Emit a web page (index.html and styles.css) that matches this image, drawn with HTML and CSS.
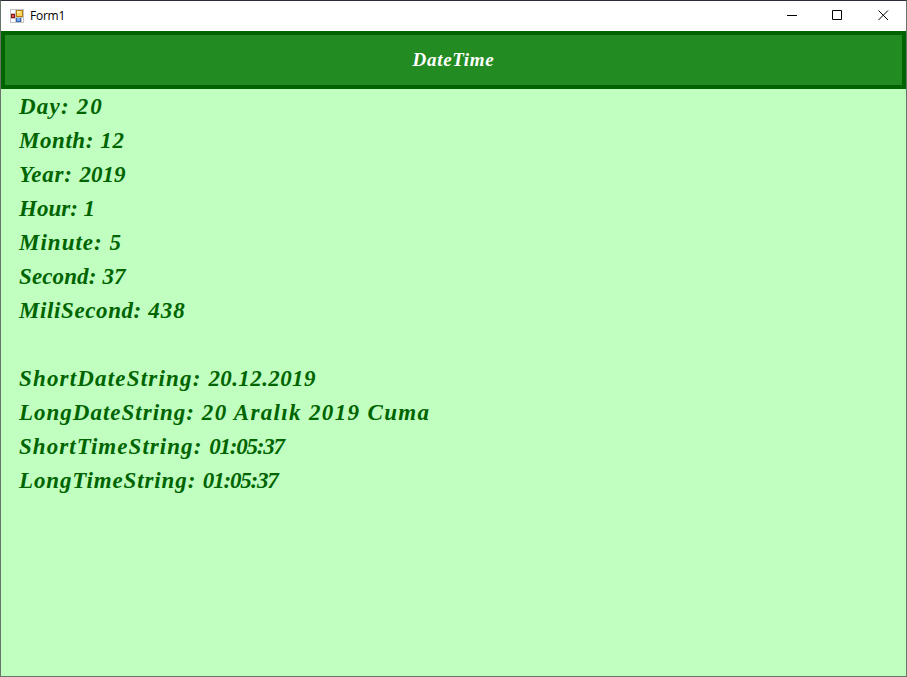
FILE: index.html
```html
<!DOCTYPE html>
<html lang="tr">
<head>
<meta charset="utf-8">
<title>Form1</title>
<link rel="stylesheet" href="styles.css">
</head>
<body>
<main class="window">
  <header class="titlebar">
    <svg class="app-icon" width="14" height="14" viewBox="0 0 14 14" shape-rendering="crispEdges">
      <path fill="#c3c3c3" d="M0 0h14v14H0z"/>
      <path fill="#fff" d="M1 1h4v3H1zM1 10h4v3H1zM12 9h1v4h-1z"/>
      <path fill="#b57c12" d="M6 1h7v7H6z"/>
      <path fill="#ffd65a" d="M7 2h5v5H7z"/>
      <path fill="#fff0a5" d="M7 2h3v2H7z"/>
      <path fill="#8e1515" d="M1 5h4v4H1z"/>
      <path fill="#d85548" d="M2 6h2v2H2z"/>
      <path fill="#3465b5" d="M6 9h5v4H6z"/>
      <path fill="#79adf0" d="M7 9h3v3H7z"/>
    </svg>
    <span class="title">Form1</span>
    <div class="controls">
      <svg width="46" height="30" viewBox="0 0 46 30"><path d="M18 14.5h10"/></svg>
      <svg width="45" height="30" viewBox="0 0 45 30"><path d="M17.500 9.500h9v9h-9z"/></svg>
      <svg width="46" height="30" viewBox="0 0 46 30"><path d="M18.500 9.500l9.500 9.500M28 9.500l-9.500 9.500"/></svg>
    </div>
  </header>
  <h1 class="banner">DateTime</h1>
  <section class="output">
    <p class="day"><span>Day: </span><b>20</b></p>
    <p class="month"><span>Month: </span><b>12</b></p>
    <p class="year"><span>Year: </span><b>2019</b></p>
    <p class="hour"><span>Hour: </span><b>1</b></p>
    <p class="minute"><span>Minute: </span><b>5</b></p>
    <p class="second"><span>Second: </span><b>37</b></p>
    <p class="milli"><span>MiliSecond: </span><b>438</b></p>
    <p></p>
    <p class="short-date"><span>ShortDateString: </span><b>20.12.2019</b></p>
    <p class="long-date"><span>LongDateString: </span><b>20 Aralık 2019 Cuma</b></p>
    <p class="short-time"><span>ShortTimeString: </span><b>01:05:37</b></p>
    <p class="long-time"><span>LongTimeString: </span><b>01:05:37</b></p>
  </section>
</main>
</body>
</html>
```
FILE: styles.css
```css
* { box-sizing: border-box; }
body { margin: 0; }
.window {
  width: 907px;
  height: 677px;
  display: flex;
  flex-direction: column;
  border: 1px solid #68736a;
  border-top-color: #2b2c39;
  background: #c0ffc0;
}
.titlebar {
  height: 30px;
  display: flex;
  align-items: center;
  padding-left: 9px;
  background: #fff;
  font: 12px "Open Sans", "Noto Sans", sans-serif;
  color: #000;
}
.title { margin-left: 6px; margin-top: -2px; letter-spacing: -0.25px; }
.controls { display: flex; height: 30px; margin-left: auto; }
.controls path { fill: none; stroke: #000; stroke-width: 1; }
.banner {
  height: 58px;
  margin: 0;
  display: flex;
  align-items: center;
  justify-content: center;
  border: 4px solid #006400;
  background: #228b22;
  color: #fff;
  font: italic bold 19px "Liberation Serif", serif;
  letter-spacing: 0.7px;
}
.output {
  padding: 1px 18px 0;
  color: #006400;
  font: italic bold 23px/34px "Liberation Serif", serif;
}
.output p { width: max-content; height: 34px; margin: 0; white-space: pre; }
.output b { font-weight: bold; }

/* Tracking for each label and value */
.day span { letter-spacing: 1.2px; }
.day b { letter-spacing: 2px; }
.month span { letter-spacing: 0.55px; }
.month b { letter-spacing: 0.8px; }
.year span { letter-spacing: 0.8px; }
.minute span { letter-spacing: 1px; }
.second span { letter-spacing: 0.12px; }
.milli span { letter-spacing: 0.6px; }
.milli b { letter-spacing: 1px; }
.short-date span { letter-spacing: 1.18px; }
.short-date b { letter-spacing: 0.4px; }
.long-date span { letter-spacing: 1px; }
.long-date b { letter-spacing: 1.35px; }
.short-time span { letter-spacing: 1.05px; }
.short-time b { letter-spacing: -1.2px; }
.long-time span { letter-spacing: 0.88px; }
.long-time b { letter-spacing: -1.2px; }
```
